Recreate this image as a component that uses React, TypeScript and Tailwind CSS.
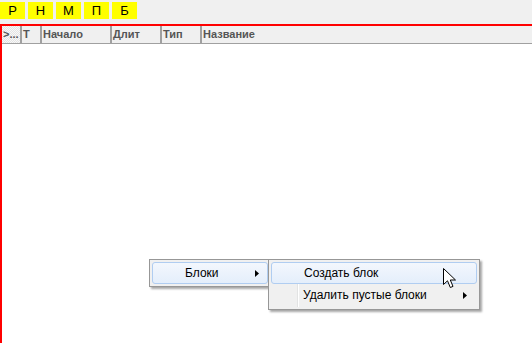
const font = { fontFamily: '"Liberation Sans", Arial, sans-serif' };

const buttons = ["Р", "Н", "М", "П", "Б"];

const columns = [
  { title: ">...", w: "w-[20px]", dots: true },
  { title: "Т", w: "w-[20px]" },
  { title: "Начало", w: "w-[70px]" },
  { title: "Длит", w: "w-[50px]" },
  { title: "Тип", w: "w-[40px]" },
];

function Arrow() {
  return (
    <svg width="4" height="7" viewBox="0 0 4 7">
      <path d="M0 0 L4 3.5 L0 7 Z" fill="#000" />
    </svg>
  );
}

function Cursor() {
  return (
    <svg width="14" height="22" viewBox="0 0 14 22">
      <path
        d="M0.5 0.5 L0.5 16.5 L4.5 12.8 L7.3 19.5 L10 18.4 L7.3 12 L12.5 12 Z"
        fill="#fff"
        stroke="#000"
        strokeWidth="1"
        strokeLinejoin="round"
      />
    </svg>
  );
}

export default function App() {
  return (
    <div className="relative w-[532px] h-[343px] bg-white overflow-hidden text-black" style={font}>
      {/* toolbar */}
      <div className="h-[24px] bg-[#f0f0f0] flex gap-[3px] pt-[2px]">
        {buttons.map((b, i) => (
          <div
            key={i}
            className="w-[25px] h-[17px] bg-[#ffff00] flex items-center justify-center text-[13px] leading-none"
          >
            {b}
          </div>
        ))}
      </div>

      {/* table */}
      <div className="border-t-2 border-l-2 border-[#ff0000] h-[319px] bg-white">
        <div className="flex h-[18px] bg-[#f0f0f0] border-b border-[#a0a0a0] text-[11px] font-bold text-[#555] leading-none">
          {columns.map((c, i) => (
            <div
              key={i}
              className={`${c.w} shrink-0 border-r-2 border-[#a0a0a0] flex items-center pl-[1px] overflow-hidden whitespace-nowrap ${
                c.dots ? "bg-[repeating-conic-gradient(#e4e4e4_0_25%,#f8f8f8_0_50%)] bg-[length:2px_2px]" : ""
              }`}
            >
              {c.title}
            </div>
          ))}
          <div className="flex-1 flex items-center pl-[1px]">Название</div>
        </div>
      </div>

      {/* context menu */}
      <div className="absolute left-[149px] top-[259px] w-[122px] h-[28px] bg-[#f0f0f0] border border-[#979797] shadow-[2px_2px_2px_rgba(0,0,0,0.35)] p-[2px]">
        <div className="absolute left-[29px] top-[2px] bottom-[2px] border-l border-[#e2e3e3] bg-white w-[2px]" />
        <div className="relative h-[22px] rounded-[3px] border border-[#b0cdf1] bg-[linear-gradient(#f3f7fd,#e4eefb)] flex items-center pl-[32px] pr-[8px] text-[12px]">
          <span className="flex-1">Блоки</span>
          <Arrow />
        </div>
      </div>

      {/* submenu */}
      <div className="absolute left-[268px] top-[259px] w-[212px] h-[51px] bg-[#f0f0f0] border border-[#979797] shadow-[2px_2px_2px_rgba(0,0,0,0.35)] p-[2px]">
        <div className="absolute left-[28px] top-[2px] bottom-[2px] border-l border-[#e2e3e3] w-[2px] bg-white" />
        <div className="relative h-[22px] rounded-[3px] border border-[#b0cdf1] bg-[linear-gradient(#f3f7fd,#e4eefb)] flex items-center pl-[32px] text-[12px]">
          Создать блок
        </div>
        <div className="relative h-[22px] flex items-center pl-[32px] pr-[10px] text-[12px]">
          <span className="flex-1">Удалить пустые блоки</span>
          <Arrow />
        </div>
      </div>

      <div className="absolute left-[443px] top-[268px]">
        <Cursor />
      </div>
    </div>
  );
}
